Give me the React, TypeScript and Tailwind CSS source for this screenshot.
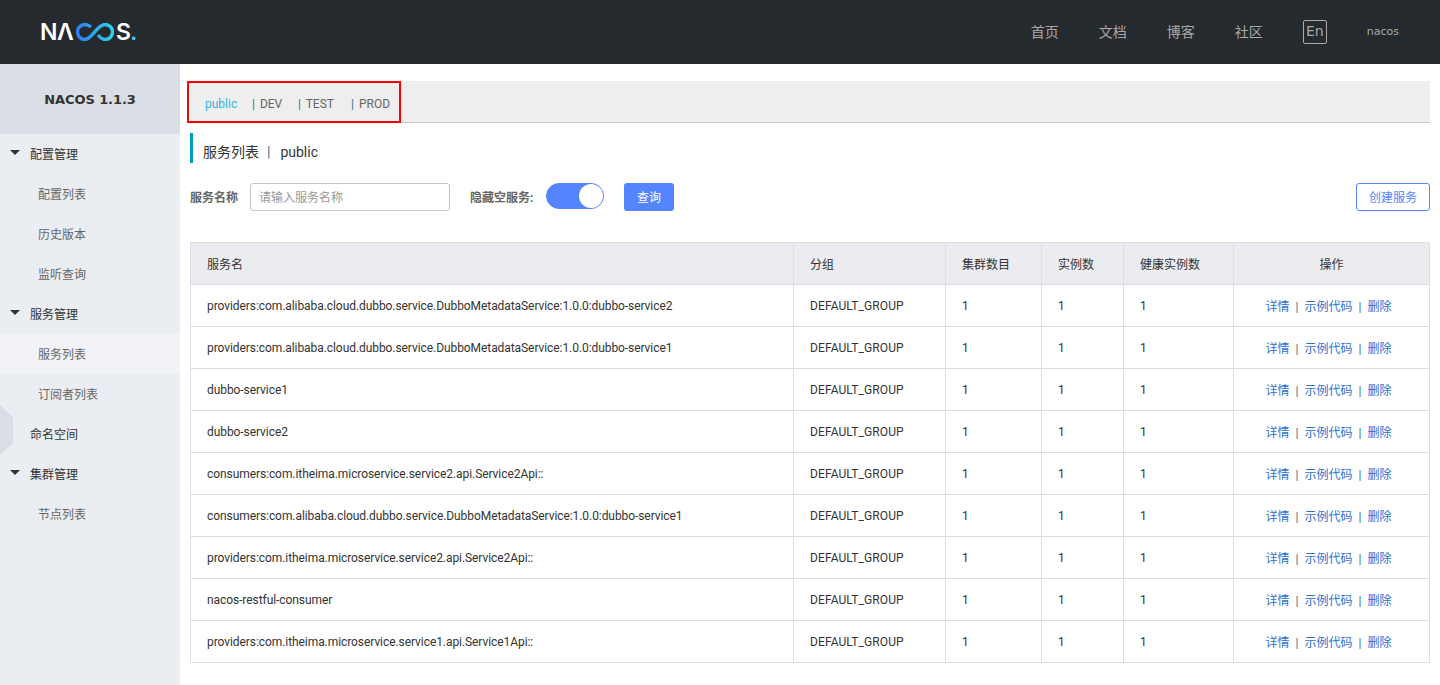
import { useState } from "react";

const FONT = "font-['Roboto','Noto_Sans_CJK_SC',sans-serif]";

const services = [
  "providers:com.alibaba.cloud.dubbo.service.DubboMetadataService:1.0.0:dubbo-service2",
  "providers:com.alibaba.cloud.dubbo.service.DubboMetadataService:1.0.0:dubbo-service1",
  "dubbo-service1",
  "dubbo-service2",
  "consumers:com.itheima.microservice.service2.api.Service2Api::",
  "consumers:com.alibaba.cloud.dubbo.service.DubboMetadataService:1.0.0:dubbo-service1",
  "providers:com.itheima.microservice.service2.api.Service2Api::",
  "nacos-restful-consumer",
  "providers:com.itheima.microservice.service1.api.Service1Api::",
];

function Logo() {
  return (
    <div className="flex items-center h-[22px] font-['Inter',sans-serif] font-semibold text-[23px] leading-none text-white">
      <span className="w-[17px]">N</span>
      <span className="w-[19px]">Λ</span>
      <svg width="38" height="18" viewBox="0 0 38 18" className="mr-[2px]">
        <defs>
          <linearGradient id="nacosLoop" x1="0" x2="1" y1="0" y2="0">
            <stop offset="0" stopColor="#2f80f0" />
            <stop offset="1" stopColor="#2fd0ee" />
          </linearGradient>
        </defs>
        <path
          d="M15 4C13 2.500 11 1.500 9 1.500C4.500 1.500 1.500 5 1.500 9C1.500 13 4.500 16.500 9 16.500C16 16.500 21 1.500 29 1.500C33.500 1.500 36.500 5 36.500 9C36.500 13 33.500 16.500 29 16.500C26 16.500 24 14.500 22 12"
          fill="none"
          stroke="url(#nacosLoop)"
          strokeWidth="3.4"
        />
      </svg>
      <span className="w-[17px]">S</span>
      <span className="text-[#2fd0ee] -ml-[3px]">.</span>
    </div>
  );
}

function Header() {
  return (
    <header className="h-16 bg-[#252a2f] flex items-center justify-between pl-10 pr-10 shrink-0">
      <Logo />
      <nav className="flex items-center text-[#a9a9a9] text-sm">
        <a className="w-[68px]">首页</a>
        <a className="w-[68px]">文档</a>
        <a className="w-[68px]">博客</a>
        <a className="w-[68px]">社区</a>
        <span className="w-6 h-6 border border-[#a9a9a9] rounded-[2px] flex items-center justify-center leading-none pb-[2px] mr-10 font-['DejaVu_Sans',sans-serif]">
          En
        </span>
        <span className="text-[11px] mr-px font-['DejaVu_Sans',sans-serif]">nacos</span>
      </nav>
    </header>
  );
}

function MenuGroup({ label }: { label: string }) {
  return (
    <div className="h-10 flex items-center text-[#333] pl-[10px] pt-[2px]">
      <span className="w-0 h-0 border-x-[5px] border-x-transparent border-t-[5px] border-t-[#333] mr-[10px] mb-[5px]" />
      {label}
    </div>
  );
}

function MenuItem({ label, active }: { label: string; active?: boolean }) {
  return (
    <div className={`h-10 flex items-center pl-[38px] pt-[2px] text-[#666] ${active ? "bg-[#f2f3f7]" : ""}`}>{label}</div>
  );
}

function Sidebar() {
  return (
    <aside className="relative w-[180px] shrink-0 bg-[#eaedf1] text-xs">
      <div className="h-[70px] bg-[#d9dee4] flex items-center justify-center pt-[2px] text-[13px] tracking-[-0.1px] font-bold text-[#333] font-['DejaVu_Sans',sans-serif]">
        NACOS 1.1.3
      </div>
      <MenuGroup label="配置管理" />
      <MenuItem label="配置列表" />
      <MenuItem label="历史版本" />
      <MenuItem label="监听查询" />
      <MenuGroup label="服务管理" />
      <MenuItem label="服务列表" active />
      <MenuItem label="订阅者列表" />
      <div className="h-10 flex items-center pl-[30px] pt-[2px] text-[#333]">命名空间</div>
      <MenuGroup label="集群管理" />
      <MenuItem label="节点列表" />
      {/* collapse handle */}
      <div className="absolute left-0 top-[341px] w-[13px] h-[50px] bg-[#d9dee4] [clip-path:polygon(0_0,100%_24%,100%_76%,0_100%)]" />
    </aside>
  );
}

function Tabs() {
  const envs = [
    { name: "DEV", width: "w-[46px]" },
    { name: "TEST", width: "w-[53px]" },
    { name: "PROD", width: "w-auto" },
  ];
  return (
    <div className="relative h-[42px] bg-[#eee] border-b border-[#ccc] flex items-center pl-[15px] pt-[4px] text-xs text-[#666]">
      <span className="w-[47px] text-[#33b5dc]">public</span>
      {envs.map((env) => (
        <span key={env.name} className={env.width}>
          <span className="text-[#3a6a8a] mr-[2px]">|</span> {env.name}
        </span>
      ))}
      {/* red annotation box */}
      <div className="absolute -left-[3px] top-0 w-[214px] h-[42px] border-2 border-[#f00]" />
    </div>
  );
}

function Toolbar() {
  const [on, setOn] = useState(true);
  return (
    <div className="flex items-center h-7 mt-5 text-xs">
      <span className="font-bold text-[#666] w-[60px] pt-[2px]">服务名称</span>
      <input
        placeholder="请输入服务名称"
        className="w-[200px] h-7 border border-[#c4c6cf] rounded-[3px] px-2 pt-[2px] outline-none placeholder:text-[#999]"
      />
      <span className="font-bold text-[#666] ml-5 w-[76px] pt-[2px]">隐藏空服务:</span>
      <button
        onClick={() => setOn(!on)}
        className={`w-[58px] h-[26px] self-start rounded-full border border-[#5584ff] flex items-center ${on ? "bg-[#5584ff] justify-end" : "bg-white justify-start"}`}
      >
        <span className="w-6 h-6 rounded-full bg-white" />
      </button>
      <button className="ml-5 w-[50px] h-7 pt-[2px] rounded-[3px] bg-[#5584ff] text-white">查询</button>
      <button className="ml-auto w-[74px] h-7 pt-[2px] rounded-[3px] border border-[#5584ff] text-[#5584ff]">创建服务</button>
    </div>
  );
}

function ServiceTable() {
  const th = "border border-[#dcdee3] bg-[#ebecf0] font-normal px-4 pt-[2px] text-[#333]";
  const td = "border border-[#dcdee3] px-4";
  return (
    <table className="w-[1239px] mt-[31px] table-fixed border-collapse text-xs">
      <colgroup>
        <col className="w-[603px]" />
        <col className="w-[152px]" />
        <col className="w-[96px]" />
        <col className="w-[82px]" />
        <col className="w-[110px]" />
        <col className="w-[196px]" />
      </colgroup>
      <thead>
        <tr className="h-[42px]">
          <th className={`${th} text-left`}>服务名</th>
          <th className={`${th} text-left`}>分组</th>
          <th className={`${th} text-left`}>集群数目</th>
          <th className={`${th} text-left`}>实例数</th>
          <th className={`${th} text-left`}>健康实例数</th>
          <th className={`${th} text-center`}>操作</th>
        </tr>
      </thead>
      <tbody>
        {services.map((name) => (
          <tr key={name} className="h-[42px] text-[#333]">
            <td className={`${td} tracking-[-0.07px]`}>{name}</td>
            <td className={`${td} tracking-[0.1px]`}>DEFAULT_GROUP</td>
            <td className={td}>1</td>
            <td className={td}>1</td>
            <td className={td}>1</td>
            <td className="border border-[#dcdee3] pl-4 pr-[22px] pt-[2px] text-center text-[#2b6fd6]">
              <a>详情</a>
              <span className="mx-[6px] text-[#3a6a8a]">|</span>
              <a>示例代码</a>
              <span className="mx-[6px] text-[#3a6a8a]">|</span>
              <a>删除</a>
            </td>
          </tr>
        ))}
      </tbody>
    </table>
  );
}

export default function App() {
  return (
    <div className={`h-screen flex flex-col overflow-hidden bg-white ${FONT}`}>
      <Header />
      <div className="flex flex-1 min-h-0">
        <Sidebar />
        <main className="flex-1 min-w-0 pl-[10px] pr-[10px] pt-[17px]">
          <Tabs />
          <div className="mt-[10px] h-[30px] border-l-[3px] border-[#0099cc] pl-[10px] pt-[8px] flex items-center text-sm text-[#333]">
            服务列表
            <span className="ml-2 mr-[10px] text-[#3a6a8a]">|</span>
            public
          </div>
          <Toolbar />
          <ServiceTable />
        </main>
      </div>
    </div>
  );
}
